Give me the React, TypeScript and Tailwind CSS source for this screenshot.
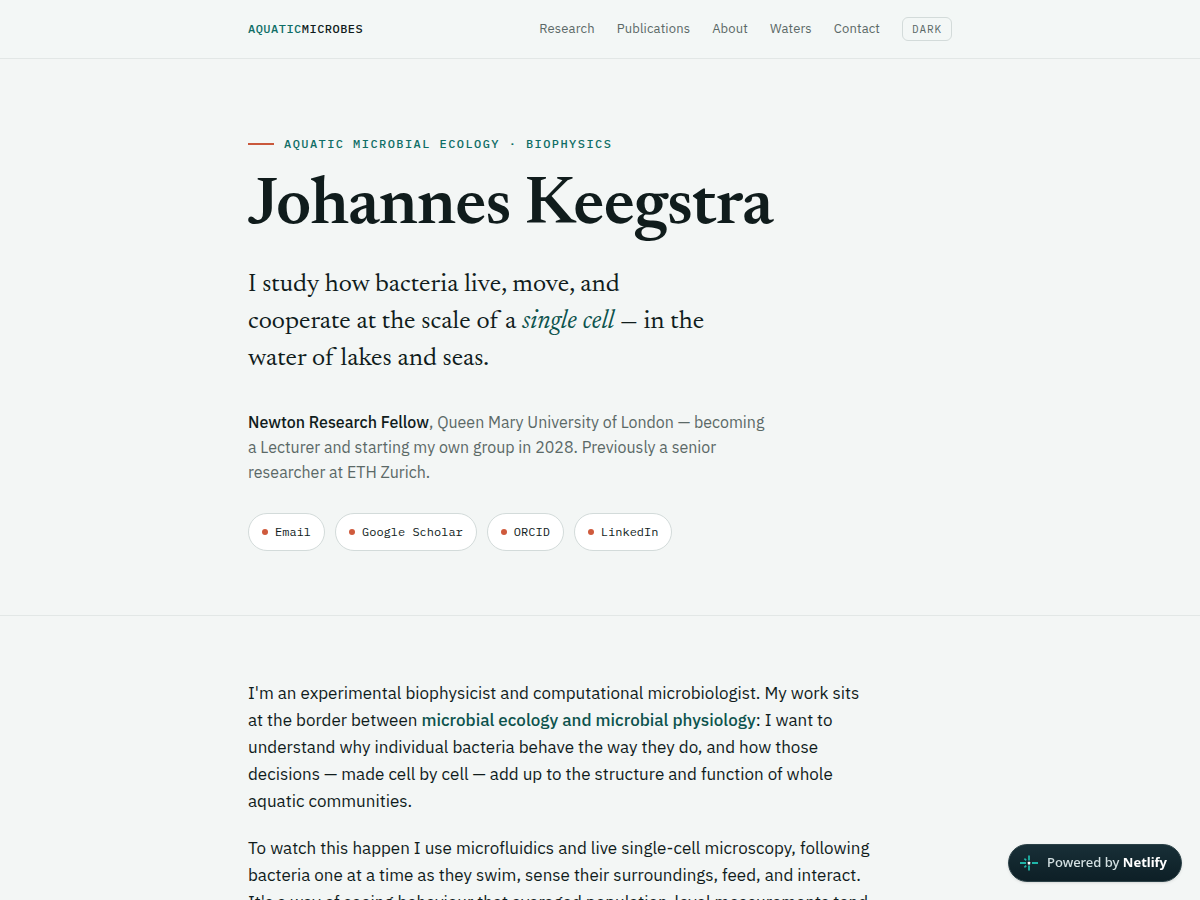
import React from "react";

const navLinks = ["Research", "Publications", "About", "Waters", "Contact"];
const profiles = ["Email", "Google Scholar", "ORCID", "LinkedIn"];

function NetlifyMark() {
  return (
    <svg width="18" height="18" viewBox="0 0 18 18" fill="none" aria-hidden="true">
      <path d="M0 9h6M12 9h6M9 1.5v5M9 11.5v5" stroke="#1fb5a8" strokeWidth="1.8" />
      <path d="M4.4 4.6l1.8 1.8M4.4 13.4l1.8-1.8" stroke="#1fb5a8" strokeWidth="1.6" />
      <rect x="7.8" y="7.8" width="2.4" height="2.6" rx="0.5" fill="#fff" />
    </svg>
  );
}

export default function App() {
  return (
    <div className="min-h-screen bg-[#f3f6f5] font-['IBM_Plex_Sans','Roboto',sans-serif] text-[#101c1c]">
      <header className="border-b border-[#e2e7e6] bg-[#f3f7f6]">
        <div className="mx-auto flex h-[58px] max-w-[752px] items-center justify-between px-6">
          <a href="#top" className="font-['IBM_Plex_Mono','Liberation_Mono',monospace] text-xs font-medium tracking-[0.04em]">
            <span className="text-[#0f6e66]">AQUATIC</span>MICROBES
          </a>
          <nav className="flex items-center gap-[22px] text-[13px] tracking-[0.01em] text-[#5b6967]">
            {navLinks.map((link) => (
              <a key={link} href={`#${link.toLowerCase()}`}>
                {link}
              </a>
            ))}
            <button className="h-6 rounded-md border border-[#d3dbda] px-[9px] font-['IBM_Plex_Mono','Liberation_Mono',monospace] text-[11px] tracking-[0.08em]">
              DARK
            </button>
          </nav>
        </div>
      </header>

      <main>
        {/* Hero */}
        <section className="border-b border-[#e2e7e6]">
          <div className="mx-auto max-w-[752px] px-6 pt-[76px] pb-16">
            <p className="flex items-center gap-2.5 font-['IBM_Plex_Mono','Liberation_Mono',monospace] text-xs leading-[18px] font-medium tracking-[0.12em] text-[#0f6e66]">
              <span className="h-0.5 w-[26px] bg-[#c9583c]" />
              AQUATIC MICROBIAL ECOLOGY · BIOPHYSICS
            </p>
            <h1 className="mt-[18px] font-['Newsreader_Display','Newsreader','Liberation_Serif',serif] text-[68px] leading-[72px] font-semibold tracking-[-0.01em] [font-variation-settings:'opsz'_72]">
              Johannes Keegstra
            </h1>
            <p className="mt-6 max-w-[470px] font-['Newsreader','Liberation_Serif',serif] text-[26px] leading-[37px]">
              I study how bacteria live, move, and cooperate at the scale of a{" "}
              <em className="text-[#0c534d]">single cell</em> — in the water of lakes and seas.
            </p>
            <p className="mt-8 max-w-[524px] text-base leading-[25px] text-[#5b6967]">
              <strong className="font-medium text-[#101c1c]">Newton Research Fellow</strong>, Queen Mary University of
              London — becoming a Lecturer and starting my own group in 2028. Previously a senior researcher at ETH
              Zurich.
            </p>
            <div className="mt-7 flex flex-wrap gap-2.5">
              {profiles.map((name) => (
                <a
                  key={name}
                  href={`#${name}`}
                  className="flex h-[38px] items-center gap-[7px] rounded-full border border-[#d3dbda] bg-white px-[13px] font-['IBM_Plex_Mono','Liberation_Mono',monospace] text-xs"
                >
                  <span className="size-1.5 rounded-full bg-[#cf5a3c]" />
                  {name}
                </a>
              ))}
            </div>
          </div>
        </section>

        {/* Intro */}
        <section className="mx-auto max-w-[752px] px-6 pt-16">
          <div className="max-w-[626px] space-y-5 text-[17px] leading-[27px]">
            <p>
              I'm an experimental biophysicist and computational microbiologist. My work sits at the border between{" "}
              <strong className="font-medium text-[#0c534d]">microbial ecology and microbial physiology</strong>: I want
              to understand why individual bacteria behave the way they do, and how those decisions — made cell by cell
              — add up to the structure and function of whole aquatic communities.
            </p>
            <p>
              To watch this happen I use microfluidics and live single-cell microscopy, following bacteria one at a time
              as they swim, sense their surroundings, feed, and interact. It's a way of seeing behaviour that averaged
              population-level measurements tend
            </p>
          </div>
        </section>
      </main>

      <a
        href="https://www.netlify.com"
        className="fixed right-[18px] bottom-[18px] flex h-[38px] items-center gap-[9px] rounded-full border border-[#2b4147] bg-linear-to-b from-[#182f37] to-[#0d1f26] pr-3.5 pl-[11px] font-['Noto_Sans',sans-serif] text-[13px] font-medium text-[#d3e0e2] shadow-sm"
      >
        <NetlifyMark />
        <span>
          Powered by <strong className="font-bold text-white">Netlify</strong>
        </span>
      </a>
    </div>
  );
}
